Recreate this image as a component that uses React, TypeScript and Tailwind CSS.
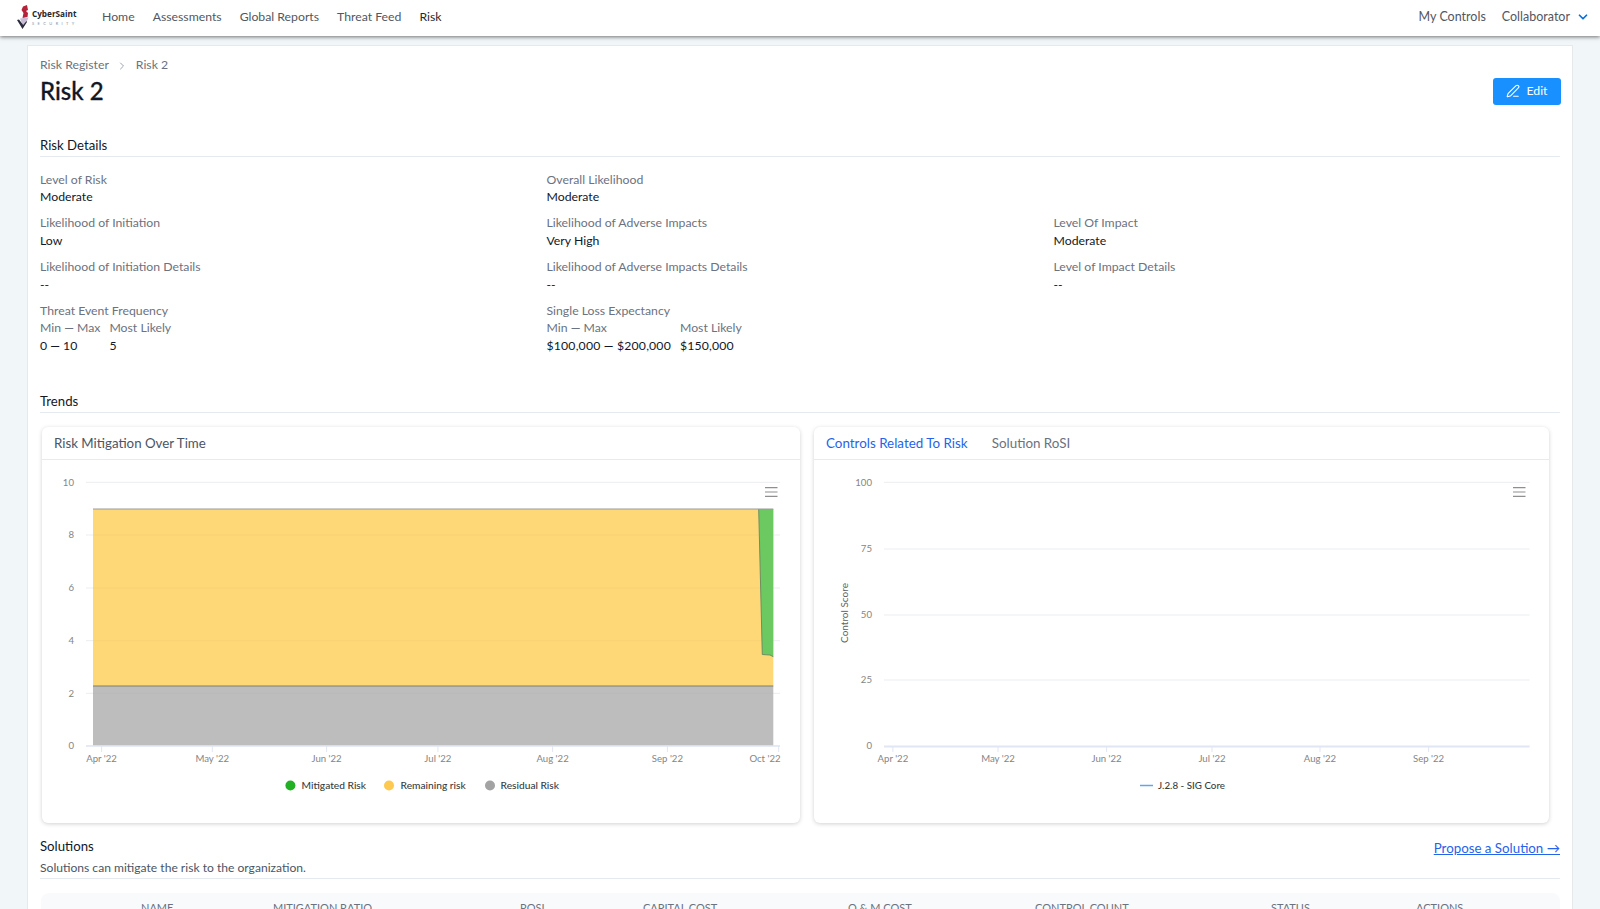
import React from "react";
import { ChevronRight, ChevronDown, PenLine } from "lucide-react";

function Field({ label, value }: { label: string; value: string }) {
  return (
    <div>
      <div className="text-[12.25px] leading-[17.5px] text-[#6b7280]">{label}</div>
      <div className="text-[12.25px] leading-[17.5px] text-[#111827]">{value}</div>
    </div>
  );
}

function Range({ label, range, likely, wide }: { label: string; range: string; likely: string; wide?: boolean }) {
  return (
    <div>
      <div className="text-[12.25px] leading-[17.5px] text-[#6b7280]">{label}</div>
      <div className="grid w-fit grid-cols-[auto_auto] gap-x-[9px] text-[12.25px] leading-[17.5px]">
        <div className="text-[#6b7280]">Min — Max</div>
        <div className="text-[#6b7280]">Most Likely</div>
        <div className={wide ? "tracking-[0.18px] text-[#111827]" : "text-[#111827]"}>{range}</div>
        <div className={wide ? "tracking-[0.18px] text-[#111827]" : "text-[#111827]"}>{likely}</div>
      </div>
    </div>
  );
}

function SectionHead({ title, className }: { title: string; className: string }) {
  return (
    <div className={`h-[22px] border-b border-[#e5e9f0] text-[13.2px] leading-[20px] text-[#111827] ${className}`}>
      {title}
    </div>
  );
}

function Menu({ x }: { x: number }) {
  return (
    <g stroke="#8f8f8f" strokeWidth="1.2">
      <line x1={x} x2={x + 12.5} y1="487.6" y2="487.6" />
      <line x1={x} x2={x + 12.5} y1="492" y2="492" />
      <line x1={x} x2={x + 12.5} y1="496.4" y2="496.4" />
    </g>
  );
}

const axisText = { fontSize: 9.6, fill: "#858585" };
const legendText = { fontSize: 10.2, fill: "#373d3f", fontWeight: 500 };

function LeftChart() {
  const rows: [string, number][] = [["10", 482.3], ["8", 535], ["6", 588], ["4", 640.7], ["2", 693.3], ["0", 745.8]];
  const ticks: [string, number][] = [["Apr '22", 101.6], ["May '22", 212.3], ["Jun '22", 326.6], ["Jul '22", 437.9], ["Aug '22", 552.6], ["Sep '22", 667.4], ["Oct '22", 765]];
  return (
    <svg viewBox="42 460 758 362" className="block h-[362px] w-[758px]">
      {rows.map(([t, y]) => (
        <g key={t}>
          <line x1="86" x2="780" y1={y} y2={y} stroke="#ebedef" strokeWidth="1" />
          <text x="74" y={y + 3.4} textAnchor="end" {...axisText}>{t}</text>
        </g>
      ))}
      <rect x="93" y="509" width="680.3" height="177" fill="#fed777" />
      <rect x="93" y="686" width="680.3" height="59.8" fill="#bdbdbd" />
      <g stroke="#000" strokeOpacity="0.025">
        {rows.slice(1, 5).map(([t, y]) => <line key={t} x1="93" x2="773" y1={y} y2={y} />)}
      </g>
      <path d="M758.7 509 L773.3 509 L773.3 656.7 L770 655 L762.3 654.5 Z" fill="#6cc860" />
      <path d="M758.7 509 L762.3 654.5 L770 655 L773.3 656.7" fill="none" stroke="#6f8f60" strokeWidth="1" />
      <line x1="93" x2="773.3" y1="509" y2="509" stroke="#9b9b98" strokeWidth="1.2" />
      <line x1="93" x2="773.3" y1="686" y2="686" stroke="#80806a" strokeWidth="1.2" />
      <line x1="86" x2="780" y1="746" y2="746" stroke="#e0e6f3" strokeWidth="1.5" />
      {ticks.map(([t, x], i) => (
        <g key={t}>
          <line x1={i === 6 ? 778.7 : x} x2={i === 6 ? 778.7 : x} y1="746" y2="752" stroke="#e0e6f3" />
          <text x={x} y="761.5" textAnchor="middle" {...axisText}>{t}</text>
        </g>
      ))}
      <Menu x={765} />
      <circle cx="290.4" cy="785.5" r="5" fill="#22b024" />
      <text x="301.6" y="789" {...legendText}>Mitigated Risk</text>
      <circle cx="389" cy="785.5" r="5" fill="#fdc94f" />
      <text x="400.6" y="789" {...legendText}>Remaining risk</text>
      <circle cx="490" cy="785.5" r="5" fill="#a3a3a3" />
      <text x="500.6" y="789" {...legendText}>Residual Risk</text>
    </svg>
  );
}

function RightChart() {
  const rows: [string, number][] = [["100", 482.3], ["75", 549], ["50", 615], ["25", 680], ["0", 746]];
  const ticks: [string, number][] = [["Apr '22", 892.9], ["May '22", 998], ["Jun '22", 1106.6], ["Jul '22", 1212], ["Aug '22", 1320], ["Sep '22", 1428.6]];
  return (
    <svg viewBox="814 460 735 362" className="block h-[362px] w-[735px]">
      {rows.map(([t, y]) => (
        <g key={t}>
          {y < 746 && <line x1="884" x2="1529.6" y1={y} y2={y} stroke="#ebedef" strokeWidth="1" />}
          <text x="872" y={y + 3.4} textAnchor="end" {...axisText}>{t}</text>
        </g>
      ))}
      <text transform="translate(847.5 613) rotate(-90)" textAnchor="middle" fontSize="10" fill="#5f5f5f">Control Score</text>
      <line x1="884" x2="1529.6" y1="746.5" y2="746.5" stroke="#e0e6f3" strokeWidth="2" />
      {ticks.map(([t, x]) => (
        <g key={t}>
          <line x1={x} x2={x} y1="746" y2="752" stroke="#e0e6f3" />
          <text x={x} y="761.5" textAnchor="middle" {...axisText}>{t}</text>
        </g>
      ))}
      <Menu x={1513} />
      <line x1="1140" x2="1153" y1="785.5" y2="785.5" stroke="#60a5f0" strokeWidth="1.5" />
      <text x="1158" y="789" fontSize="9.8" fill="#373d3f" fontWeight="500">J.2.8 - SIG Core</text>
    </svg>
  );
}

function Logo() {
  return (
    <div className="ml-[16px] flex w-[70px] items-center">
      <svg viewBox="0 0 14 24" className="h-[24px] w-[14px] shrink-0">
        <path d="M7 1.5 L11 0 L12 5 L10 6 L12 8 L11.5 12 L6.5 13 L7.5 8 L5.5 5 Z" fill="#b3243a" />
        <path d="M4 13.5 L12.5 12.5 L11 16 L7 21 Z" fill="#c9bcd6" />
        <path d="M1 15 L3 14.5 L7.2 20 L10.5 16 L11 17 L6.5 24 Z" fill="#2b2b3c" />
      </svg>
      <div className="ml-[2px] flex flex-col">
        <span className="text-[8.2px] leading-[10px] font-bold text-[#23272e] [font-family:'Open_Sans',sans-serif]">CyberSaint</span>
        <span className="mt-[2px] text-[4px] leading-[5px] tracking-[3.4px] text-[#8a8f96]">SECURITY</span>
      </div>
    </div>
  );
}

export default function App() {
  const nav: [string, boolean][] = [["Home", false], ["Assessments", false], ["Global Reports", false], ["Threat Feed", false], ["Risk", true]];
  const headers: [string, string][] = [
    ["NAME", "w-[232px] pl-[100px]"], ["MITIGATION RATIO", "w-[247px]"], ["ROSI", "w-[123px]"], ["CAPITAL COST", "w-[205px]"],
    ["O & M COST", "w-[187px]"], ["CONTROL COUNT", "w-[236px]"], ["STATUS", "w-[145px]"], ["ACTIONS", "w-[47px]"],
  ];
  return (
    <div className="h-[909px] overflow-hidden bg-[#f1f6f9] text-[14px] [font-family:Lato,sans-serif]">
      <header className="relative z-10 flex h-[36px] items-center bg-white pb-[2px] shadow-[0_1px_4px_rgba(0,0,0,0.55)]">
        <Logo />
        <nav className="ml-[16px] flex gap-[18px] text-[12.25px] text-[#52575f]">
          {nav.map(([n, a]) => (
            <span key={n} className={a ? "text-[#1f2933]" : ""}>{n}</span>
          ))}
        </nav>
        <div className="ml-auto flex items-center text-[12.5px] text-[#52575f]">
          <span>My Controls</span>
          <span className="ml-[16px]">Collaborator</span>
          <ChevronDown className="ml-[6px] mr-[10px] h-[14px] w-[14px] text-[#0b6fd6]" strokeWidth={3} />
        </div>
      </header>
      <main className="pt-[9px]">
        <section className="ml-[27px] h-[900px] w-[1546px] border border-[#e5e9ec] bg-white px-[12px] pt-[10.5px]">
          <div className="flex h-[18px] items-center text-[12.25px] text-[#6b7280]">
            <span>Risk Register</span>
            <ChevronRight className="mx-[7.5px] h-[12px] w-[12px] text-[#9ca3af]" />
            <span>Risk 2</span>
          </div>
          <div className="mt-[0.5px] flex h-[32px] items-center justify-between">
            <h1 className="text-[24px] leading-[32px] font-medium text-[#111827] [-webkit-text-stroke:0.3px_#111827]">Risk 2</h1>
            <button className="-mr-[1px] flex h-[27px] w-[68px] items-center justify-center gap-[6px] rounded-[3px] bg-[#1890ff] text-[12.25px] text-white">
              <PenLine className="h-[14px] w-[14px]" strokeWidth={1.8} />
              Edit
            </button>
          </div>
          <SectionHead title="Risk Details" className="mt-[28px]" />
          <div className="mt-[13.5px] grid grid-cols-[506.5px_507px_1fr] gap-y-[8.75px]">
            <Field label="Level of Risk" value="Moderate" />
            <Field label="Overall Likelihood" value="Moderate" />
            <div />
            <Field label="Likelihood of Initiation" value="Low" />
            <Field label="Likelihood of Adverse Impacts" value="Very High" />
            <Field label="Level Of Impact" value="Moderate" />
            <Field label="Likelihood of Initiation Details" value="--" />
            <Field label="Likelihood of Adverse Impacts Details" value="--" />
            <Field label="Level of Impact Details" value="--" />
            <Range label="Threat Event Frequency" range="0 — 10" likely="5" />
            <Range label="Single Loss Expectancy" range="$100,000 — $200,000" likely="$150,000" wide />
          </div>
          <SectionHead title="Trends" className="mt-[36.5px]" />
          <div className="mt-[14px] ml-[2px] flex gap-[14px]">
            <div className="h-[396px] w-[758px] overflow-hidden rounded-[6px] bg-white shadow-[0_1px_4px_rgba(0,0,0,0.18)]">
              <div className="flex h-[33px] items-center border-b border-[#e8eaed] pl-[12px] pt-[1.5px] text-[13.3px] text-[#4b5563]">Risk Mitigation Over Time</div>
              <LeftChart />
            </div>
            <div className="h-[396px] w-[735px] overflow-hidden rounded-[6px] bg-white shadow-[0_1px_4px_rgba(0,0,0,0.18)]">
              <div className="flex h-[33px] items-center gap-[24px] border-b border-[#e8eaed] pl-[12px] pt-[1px] text-[13.4px]">
                <span className="text-[#2563eb]">Controls Related To Risk</span>
                <span className="text-[#6b7280]">Solution RoSI</span>
              </div>
              <RightChart />
            </div>
          </div>
          <div className="mt-[13px] flex h-[43px] justify-between border-b border-[#e5e9f0]">
            <div>
              <div className="text-[13.2px] leading-[20px] text-[#111827]">Solutions</div>
              <div className="mt-[3px] text-[12.1px] leading-[18px] text-[#4b5563]">Solutions can mitigate the risk to the organization.</div>
            </div>
            <a className="mt-[2px] h-[20px] text-[13.3px] leading-[20px] text-[#2563eb] underline">Propose a Solution →</a>
          </div>
          <div className="mt-[14px] ml-[1px] flex h-[60px] rounded-t-[8px] bg-[#f8fafc] pt-[8px] text-[11px] leading-[14px] text-[#6b7280]">
            {headers.map(([h, w]) => (
              <div key={h} className={`shrink-0 whitespace-nowrap ${w}`}>{h}</div>
            ))}
          </div>
        </section>
      </main>
    </div>
  );
}
